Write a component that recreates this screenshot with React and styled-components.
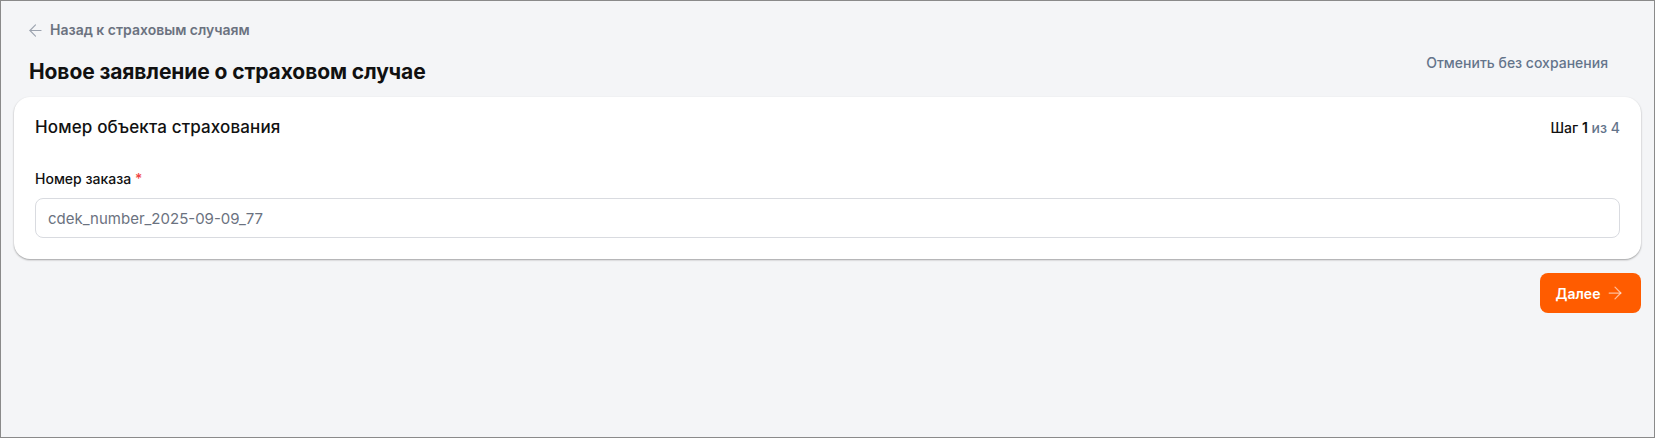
import styled, { createGlobalStyle } from "styled-components";
import { ArrowLeft, ArrowRight } from "lucide-react";

const GlobalStyle = createGlobalStyle`
  * {
    box-sizing: border-box;
  }
  html,
  body {
    margin: 0;
    padding: 0;
    background: #f4f5f7;
  }
  body {
    font-family: Inter, "Noto Sans", "Liberation Sans", sans-serif;
    color: #111827;
  }
`;

export default function App() {
  return (
    <>
      <GlobalStyle />
      <Page>
        <BackLink href="#">
          <ArrowLeft size={19} strokeWidth={1.4} />
          Назад к страховым случаям
        </BackLink>

        <HeaderRow>
          <Title>Новое заявление о страховом случае</Title>
          <CancelButton type="button">Отменить без сохранения</CancelButton>
        </HeaderRow>

        <Card>
          <CardHead>
            <CardTitle>Номер объекта страхования</CardTitle>
            <Step>
              Шаг <b>1</b> <span>из 4</span>
            </Step>
          </CardHead>

          <Field>
            <Label>
              Номер заказа <Required>*</Required>
            </Label>
            <Input defaultValue="cdek_number_2025-09-09_77" />
          </Field>
        </Card>

        <Footer>
          <PrimaryButton type="button">
            Далее
            <ArrowRight size={20} strokeWidth={1.5} />
          </PrimaryButton>
        </Footer>
      </Page>
    </>
  );
}

const Page = styled.div`
  min-height: 100vh;
  border: 1px solid #8a8a8a;
  padding: 14px 13px;
  display: flex;
  flex-direction: column;
`;

const BackLink = styled.a`
  display: inline-flex;
  align-items: center;
  gap: 5px;
  align-self: flex-start;
  margin: 5px 0 0 12px;
  font-size: 14px;
  line-height: 20px;
  font-weight: 600;
  color: #6b7280;
  text-decoration: none;

  svg {
    color: #9ca3af;
  }
`;

const HeaderRow = styled.div`
  display: flex;
  justify-content: space-between;
  align-items: flex-start;
  padding: 0 18px 0 15px;
  margin-top: 4px;
  margin-bottom: 11px;
`;

const Title = styled.h1`
  margin: 14px 0 0;
  font-size: 21px;
  line-height: 28px;
  font-weight: 700;
  letter-spacing: -0.1px;
  color: #111111;
`;

const CancelButton = styled.button`
  border: none;
  background: transparent;
  padding: 0 15px;
  height: 36px;
  font-family: inherit;
  font-size: 14px;
  font-weight: 500;
  color: #64748b;
  cursor: pointer;
`;

const Card = styled.section`
  background: #ffffff;
  border-radius: 16px;
  box-shadow: 0 1px 2px rgba(0, 0, 0, 0.35);
  padding: 18px 21px 21px;
`;

const CardHead = styled.div`
  display: flex;
  justify-content: space-between;
  align-items: center;
  height: 24px;
`;

const CardTitle = styled.h2`
  margin: 0;
  font-size: 17px;
  line-height: 24px;
  font-weight: 500;
  letter-spacing: 0.15px;
  color: #111111;
`;

const Step = styled.div`
  font-size: 14px;
  font-weight: 500;
  color: #111111;

  b {
    font-weight: 600;
  }

  span {
    color: #64748b;
  }
`;

const Field = styled.div`
  display: flex;
  flex-direction: column;
  gap: 9px;
  margin-top: 30px;
`;

const Label = styled.label`
  font-size: 14px;
  line-height: 20px;
  font-weight: 500;
  color: #111111;
`;

const Required = styled.span`
  color: #ef4444;
`;

const Input = styled.input`
  height: 40px;
  width: 100%;
  border: 1px solid #d9dbe0;
  border-radius: 8px;
  padding: 0 12px;
  font-family: inherit;
  font-size: 15px;
  color: #6b7280;
  outline: none;
  background: #ffffff;
`;

const Footer = styled.div`
  display: flex;
  justify-content: flex-end;
  margin-top: 14px;
`;

const PrimaryButton = styled.button`
  display: inline-flex;
  align-items: center;
  gap: 5px;
  height: 40px;
  width: 101px;
  justify-content: center;
  border: none;
  border-radius: 8px;
  background: #ff5c00;
  color: #ffffff;
  font-family: inherit;
  font-size: 14px;
  font-weight: 600;
  cursor: pointer;

  svg {
    color: rgba(255, 255, 255, 0.6);
  }
`;
